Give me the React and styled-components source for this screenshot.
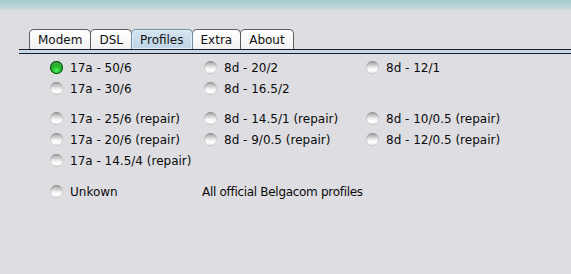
import React from "react";
import styled, { createGlobalStyle } from "styled-components";

const GlobalStyle = createGlobalStyle`
  html, body { margin: 0; padding: 0; }
  body {
    background: #dedee2;
    font-family: "DejaVu Sans", "Liberation Sans", sans-serif;
    color: #111;
  }
`;

const Window = styled.div`
  width: 571px;
  height: 274px;
  overflow: hidden;
  background: linear-gradient(
    180deg,
    #a9ccd2 0px,
    #b2d1d6 4px,
    #c2d8dc 8px,
    #d6dde1 10px,
    #dedee2 12px,
    #dedee2 100%
  );
`;

const TabBar = styled.div`
  display: flex;
  padding: 29px 0 0 29px;
  height: 20px;
`;

const Tab = styled.div`
  box-sizing: border-box;
  height: 20px;
  padding: 1px 8px 0;
  display: flex;
  align-items: center;
  justify-content: center;
  font-size: 12px;
  border: 1px solid ${(p) => (p.$active ? "#6f8ea8" : "#5e5e5e")};
  border-bottom: none;
  border-radius: 5px 5px 0 0;
  margin-right: -1px;
  position: relative;
  z-index: ${(p) => (p.$active ? 1 : 0)};
  background: ${(p) =>
    p.$active
      ? "linear-gradient(#d4e4f0, #c0d5e6)"
      : "linear-gradient(#ffffff, #f2f2f2)"};
  box-shadow: ${(p) => (p.$active ? "inset 0 0 0 1px #e2edf5" : "none")};
  color: #111;
`;

const Rule = styled.div`
  margin-left: 19px;
  height: 3px;
  border-top: 1px solid #1c1c2c;
  border-bottom: 1px solid #1c1c2c;
  background: #c6d9e8;
`;

const Body = styled.div`
  display: flex;
  flex-direction: column;
  padding: 3px 0 0 50px;
`;

const Group = styled.div`
  display: grid;
  grid-template-columns: 154px 162px auto;
  grid-auto-rows: 21px;
  margin-top: ${(p) => p.$gap || 0}px;
`;

const Option = styled.label`
  display: flex;
  align-items: center;
  gap: 7px;
  font-size: 12px;
  white-space: nowrap;
  color: #0a0a0a;
`;

const Plain = styled.div`
  display: flex;
  align-items: center;
  font-size: 12px;
  letter-spacing: -0.3px;
  white-space: nowrap;
  color: #0a0a0a;
  margin-left: ${(p) => p.$indent || 0}px;
`;

const Dot = styled.span`
  box-sizing: border-box;
  width: 13px;
  height: 13px;
  border-radius: 50%;
  flex: none;
  background: ${(p) =>
    p.$on
      ? "radial-gradient(circle at 50% 72%, #52f05a 0%, #1bb824 40%, #067a0d 80%, #045408 100%)"
      : "linear-gradient(#969696 0%, #c4c4c4 25%, #f4f4f4 55%, #ffffff 75%, #e2e2e2 100%)"};
  box-shadow: ${(p) =>
    p.$on
      ? "inset 0 0 0 1px #064a0a, inset 0 3px 2px rgba(255,255,255,0.25)"
      : "inset 0 0 0 1px rgba(120,120,120,0.3)"};
`;

const Radio = ({ on, children }) => (
  <Option>
    <Dot $on={on} />
    {children}
  </Option>
);

const Empty = styled.div``;

export default function App() {
  const tabs = ["Modem", "DSL", "Profiles", "Extra", "About"];
  return (
    <>
      <GlobalStyle />
      <Window>
        <TabBar>
          {tabs.map((t) => (
            <Tab key={t} $active={t === "Profiles"}>
              {t}
            </Tab>
          ))}
        </TabBar>
        <Rule />
        <Body>
          <Group>
            <Radio on>17a - 50/6</Radio>
            <Radio>8d - 20/2</Radio>
            <Radio>8d - 12/1</Radio>
            <Radio>17a - 30/6</Radio>
            <Radio>8d - 16.5/2</Radio>
            <Empty />
          </Group>
          <Group $gap={9}>
            <Radio>17a - 25/6 (repair)</Radio>
            <Radio>8d - 14.5/1 (repair)</Radio>
            <Radio>8d - 10/0.5 (repair)</Radio>
            <Radio>17a - 20/6 (repair)</Radio>
            <Radio>8d - 9/0.5 (repair)</Radio>
            <Radio>8d - 12/0.5 (repair)</Radio>
            <Radio>17a - 14.5/4 (repair)</Radio>
          </Group>
          <Group $gap={10}>
            <Radio>Unkown</Radio>
            <Plain $indent={-2}>All official Belgacom profiles</Plain>
          </Group>
        </Body>
      </Window>
    </>
  );
}
